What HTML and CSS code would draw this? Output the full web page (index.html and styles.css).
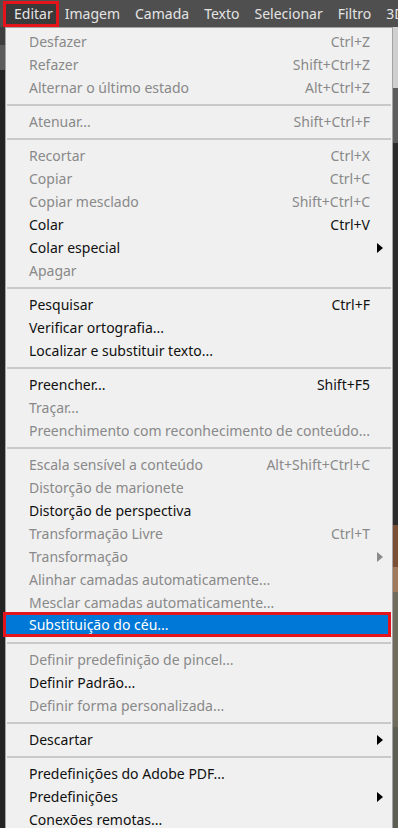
FILE: index.html
```html
<html>
    <head>
        <title>Editar</title>
        <link rel="stylesheet" href="styles.css">
    </head>
    <body>
        <!-- barra de menus no topo -->
        <div class="menubar">
            <span class="top-item open">Editar</span>
            <span class="top-item">Imagem</span>
            <span class="top-item">Camada</span>
            <span class="top-item">Texto</span>
            <span class="top-item">Selecionar</span>
            <span class="top-item">Filtro</span>
            <span class="top-item">3D</span>
        </div>

        <div class="workspace">
            <div class="left-strip"></div>

            <!-- menu Editar aberto -->
            <div class="menu">
                <div class="item off"><span class="label">Desfazer</span><span class="key">Ctrl+Z</span><span class="arrow"></span></div>
                <div class="item off"><span class="label">Refazer</span><span class="key">Shift+Ctrl+Z</span><span class="arrow"></span></div>
                <div class="item off"><span class="label">Alternar o último estado</span><span class="key">Alt+Ctrl+Z</span><span class="arrow"></span></div>
                <div class="sep"></div>
                <div class="item off"><span class="label">Atenuar...</span><span class="key">Shift+Ctrl+F</span><span class="arrow"></span></div>
                <div class="sep"></div>
                <div class="item off"><span class="label">Recortar</span><span class="key">Ctrl+X</span><span class="arrow"></span></div>
                <div class="item off"><span class="label">Copiar</span><span class="key">Ctrl+C</span><span class="arrow"></span></div>
                <div class="item off"><span class="label">Copiar mesclado</span><span class="key">Shift+Ctrl+C</span><span class="arrow"></span></div>
                <div class="item"><span class="label">Colar</span><span class="key">Ctrl+V</span><span class="arrow"></span></div>
                <div class="item"><span class="label">Colar especial</span><span class="key"></span><span class="arrow sub"></span></div>
                <div class="item off"><span class="label">Apagar</span><span class="key"></span><span class="arrow"></span></div>
                <div class="sep"></div>
                <div class="item"><span class="label">Pesquisar</span><span class="key">Ctrl+F</span><span class="arrow"></span></div>
                <div class="item"><span class="label">Verificar ortografia...</span><span class="key"></span><span class="arrow"></span></div>
                <div class="item"><span class="label">Localizar e substituir texto...</span><span class="key"></span><span class="arrow"></span></div>
                <div class="sep"></div>
                <div class="item"><span class="label">Preencher...</span><span class="key">Shift+F5</span><span class="arrow"></span></div>
                <div class="item off"><span class="label">Traçar...</span><span class="key"></span><span class="arrow"></span></div>
                <div class="item off"><span class="label">Preenchimento com reconhecimento de conteúdo...</span><span class="key"></span><span class="arrow"></span></div>
                <div class="sep"></div>
                <div class="item off"><span class="label">Escala sensível a conteúdo</span><span class="key">Alt+Shift+Ctrl+C</span><span class="arrow"></span></div>
                <div class="item off"><span class="label">Distorção de marionete</span><span class="key"></span><span class="arrow"></span></div>
                <div class="item"><span class="label">Distorção de perspectiva</span><span class="key"></span><span class="arrow"></span></div>
                <div class="item off"><span class="label">Transformação Livre</span><span class="key">Ctrl+T</span><span class="arrow"></span></div>
                <div class="item off"><span class="label">Transformação</span><span class="key"></span><span class="arrow sub"></span></div>
                <div class="item off"><span class="label">Alinhar camadas automaticamente...</span><span class="key"></span><span class="arrow"></span></div>
                <div class="item off"><span class="label">Mesclar camadas automaticamente...</span><span class="key"></span><span class="arrow"></span></div>
                <div class="item active"><span class="label">Substituição do céu...</span><span class="key"></span><span class="arrow"></span></div>
                <div class="sep"></div>
                <div class="item off"><span class="label">Definir predefinição de pincel...</span><span class="key"></span><span class="arrow"></span></div>
                <div class="item"><span class="label">Definir Padrão...</span><span class="key"></span><span class="arrow"></span></div>
                <div class="item off"><span class="label">Definir forma personalizada...</span><span class="key"></span><span class="arrow"></span></div>
                <div class="sep"></div>
                <div class="item"><span class="label">Descartar</span><span class="key"></span><span class="arrow sub"></span></div>
                <div class="sep"></div>
                <div class="item"><span class="label">Predefinições do Adobe PDF...</span><span class="key"></span><span class="arrow"></span></div>
                <div class="item"><span class="label">Predefinições</span><span class="key"></span><span class="arrow sub"></span></div>
                <div class="item"><span class="label">Conexões remotas...</span><span class="key"></span><span class="arrow"></span></div>
            </div>

            <div class="right-strip"></div>
        </div>
    </body>
</html>
```

FILE: styles.css
```css
/* Página inteira, sem margem */
body {
    margin: 0;
    height: 828px;
    overflow: hidden;
    background-color: #232323;
    font-family: "Noto Sans", "Open Sans", sans-serif;
}

/* Barra de menus */
.menubar {
    display: flex;
    align-items: center;
    height: 27px;
    background-color: #4f4f4f;
    white-space: nowrap;
    overflow: hidden;
}
.top-item {
    color: #e4e4e4;
    font-size: 14px;
    padding: 0 7.5px;
    line-height: 26px;
}
.top-item.open {
    margin-left: 3px;
    margin-right: -1.5px;
    padding: 0 3px 0 8px;
    height: 20px;
    line-height: 20px;
    background-color: #3a3a3a;
    border: 3px solid #e3141b;
}

/* Área abaixo da barra */
.workspace {
    display: flex;
    height: 801px;
}
.left-strip {
    width: 5px;
    flex: none;
    background: linear-gradient(to bottom, #3e3e3e 0 18px, #5a5a5a 18px 43px, #232323 43px);
}
.right-strip {
    flex: 1;
    background: linear-gradient(to bottom, #cfcfcf 0 61px, #5d5d5d 61px 116px, #2b2b2b 116px 498px,
        #7b4f36 498px 540px, #a07a5c 540px 565px, #6f6c5d 565px 700px, #5d5f55 700px);
}

/* O menu aberto */
.menu {
    width: 386px;
    flex: none;
    background-color: #f0f0f0;
    border: 1px solid #a3a3a3;
    border-bottom: none;
    padding-top: 2px;
    font-size: 14px;
}

.item {
    display: grid;
    grid-template-columns: 1fr auto 22px;
    align-items: center;
    height: 23px;
    padding-left: 23px;
    color: #111;
    white-space: nowrap;
}
.item.off {
    color: #898989;
}
.key {
    text-align: right;
}

/* Setinha de submenu */
.arrow.sub {
    width: 0;
    height: 0;
    margin-left: 7px;
    border-top: 5.5px solid transparent;
    border-bottom: 5.5px solid transparent;
    border-left: 6px solid #000;
}
.item.off .arrow.sub {
    border-left-color: #8a8a8a;
}

/* Item selecionado, marcado em vermelho */
.item.active {
    height: 25px;
    margin: -2px 1px 0 -3px;
    padding-left: 23px;
    box-sizing: border-box;
    background-color: #0078d7;
    border: 3px solid #e3141b;
    color: #fff;
}

/* Linha separadora */
.sep {
    height: 11px;
    display: flex;
    align-items: center;
    margin: 0 1px;
}
.sep::before {
    content: "";
    flex: 1;
    height: 2px;
    background-color: #c9c9c9;
}
```
